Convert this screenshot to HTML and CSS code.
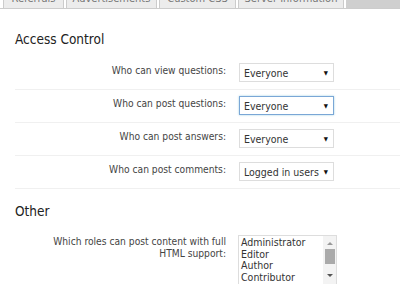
FILE: index.html
```html
<!DOCTYPE html>
<html>
<head>
<meta charset="utf-8">
<link rel="stylesheet" href="styles.css">
</head>
<body>
<div class="tabbar">
  <div class="tab t1">Referrals</div>
  <div class="tab t2">Advertisements</div>
  <div class="tab t3">Custom CSS</div>
  <div class="tab t4">Server Information</div>
  <div class="tab-rest"></div>
</div>
<div class="content">
  <h2 class="heading">Access Control</h2>
  <div class="rows">
    <div class="row">
      <div class="label">Who can view questions:</div>
      <div class="field"><div class="select"><span>Everyone</span><span class="arrow">▼</span></div></div>
    </div>
    <div class="row">
      <div class="label">Who can post questions:</div>
      <div class="field"><div class="select focused"><span>Everyone</span><span class="arrow">▼</span></div></div>
    </div>
    <div class="row">
      <div class="label">Who can post answers:</div>
      <div class="field"><div class="select"><span>Everyone</span><span class="arrow">▼</span></div></div>
    </div>
    <div class="row">
      <div class="label">Who can post comments:</div>
      <div class="field"><div class="select"><span>Logged in users</span><span class="arrow">▼</span></div></div>
    </div>
  </div>
  <h2 class="heading other">Other</h2>
  <div class="row multi">
    <div class="label">Which roles can post content with full HTML support:</div>
    <div class="field">
      <div class="listbox">
        <div class="options">
          <div>Administrator</div>
          <div>Editor</div>
          <div>Author</div>
          <div>Contributor</div>
        </div>
        <div class="scroll">
          <span class="up"></span>
          <span class="thumb"></span>
          <span class="down"></span>
        </div>
      </div>
    </div>
  </div>
</div>
</body>
</html>
```
FILE: styles.css
```css
html, body { margin: 0; padding: 0; background: #fff; }
body {
  width: 400px; height: 284px; overflow: hidden;
  font-family: "DejaVu Sans Condensed", "Noto Sans", sans-serif;
  font-size: 10.2px; color: #444;
}
.tabbar {
  height: 8px; overflow: hidden;
  display: flex; align-items: flex-end; gap: 2px;
  padding-left: 3px;
  border-bottom: 1px solid #ccc;
}
.tab {
  height: 24px; box-sizing: border-box;
  background: #ececec; border: 1px solid #ccc; border-bottom: none;
  color: #777; font-size: 11px; line-height: 14px; padding-top: 7px;
  text-align: center; flex: none; white-space: nowrap; overflow: hidden;
}
.t1 { width: 61px; }
.t2 { width: 91px; }
.t3 { width: 77px; }
.t4 { width: 106px; }
.tab-rest { flex: 1; height: 8px; background: #cfcfcf; margin-left: 0; }
.content { padding: 0 0 0 15px; }
.heading {
  margin: 21px 0 0 0; font-weight: normal; font-size: 13.5px; color: #222;
  line-height: 18px;
}
.rows { margin-top: 9px; }
.row {
  display: flex; align-items: flex-start;
  border-bottom: 1px solid #f0f0f0;
  height: 33px; box-sizing: border-box;
  padding-top: 6px;
}
.label {
  width: 211px; text-align: right; padding-right: 13px; box-sizing: content-box;
  line-height: 14px; padding-top: 1px;
}
.select {
  width: 95px; height: 19px; box-sizing: border-box;
  border: 1px solid #ddd; background: #fff; color: #333;
  display: flex; align-items: center; justify-content: space-between;
  padding: 0 5px 0 4px; line-height: 14px; white-space: nowrap;
  font-size: 10.5px;
}
.select.focused { border-color: #7aa7d6; box-shadow: 0 0 2px rgba(30,140,190,.4); }
.arrow { font-size: 6px; color: #111; }
.other { margin-top: 13px; }
.row.multi { border-bottom: none; height: auto; padding-top: 15px; }
.multi .label { width: 175px; padding-left: 36px; line-height: 12px; padding-top: 1px; }
.listbox {
  width: 99px; height: 70px; box-sizing: border-box;
  border: 1px solid #ddd; display: flex; margin-left: -1px;
}
.options { flex: 1; padding: 0 0 0 2px; color: #333; line-height: 11.7px; padding-top: 1px; font-size: 10.5px; }
.scroll { width: 13px; background: #f3f3f3; display: flex; flex-direction: column; align-items: center; }
.up { width: 0; height: 0; border-left: 3px solid transparent; border-right: 3px solid transparent; border-bottom: 3px solid #999; margin-top: 6px; }
.thumb { width: 10px; height: 15px; background: #aaa; margin-top: 4px; }
.down { width: 0; height: 0; border-left: 3px solid transparent; border-right: 3px solid transparent; border-top: 3px solid #555; margin-top: 10px; }
```
